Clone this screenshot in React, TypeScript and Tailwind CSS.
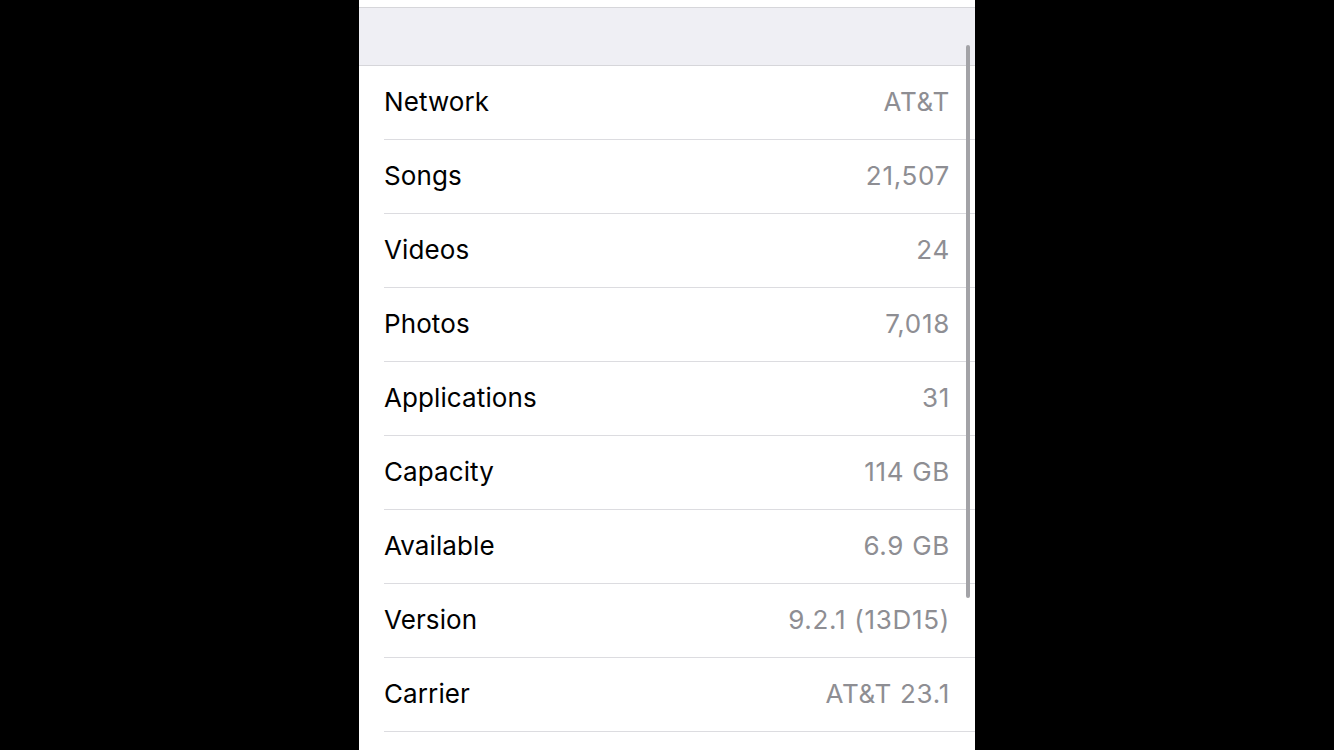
const rows = [
  { label: 'Network', value: 'AT&T' },
  { label: 'Songs', value: '21,507' },
  { label: 'Videos', value: '24' },
  { label: 'Photos', value: '7,018' },
  { label: 'Applications', value: '31' },
  { label: 'Capacity', value: '114 GB' },
  { label: 'Available', value: '6.9 GB' },
  { label: 'Version', value: '9.2.1 (13D15)' },
  { label: 'Carrier', value: 'AT&T 23.1' },
];

const App = () => {
  return (
    <div className="w-[1334px] h-[750px] bg-black flex justify-center overflow-hidden font-['Inter',sans-serif]">
      <div className="relative w-[616px] h-[750px] bg-white overflow-hidden">
        <div className="h-[7px] bg-white" />
        <div className="h-px bg-[#d6d6da]" />
        <div className="h-[57px] bg-[#efeff4]" />
        <div className="h-px bg-[#d6d6da]" />

        {rows.map((row) => (
          <div key={row.label} className="pl-[25px]">
            <div className="h-[73px] flex items-center justify-between pr-[25px] pb-[2px]">
              <span className="text-[26px] text-black tracking-[0.1px]">{row.label}</span>
              <span className="text-[26px] text-[#8e8e93] tracking-[0.7px]">{row.value}</span>
            </div>
            <div className="h-px bg-[#dcdce0]" />
          </div>
        ))}

        <div className="absolute left-[607px] top-[45px] w-[4px] h-[553px] rounded-full bg-[#a3a3a7]" />
      </div>
    </div>
  );
};

export default App;
